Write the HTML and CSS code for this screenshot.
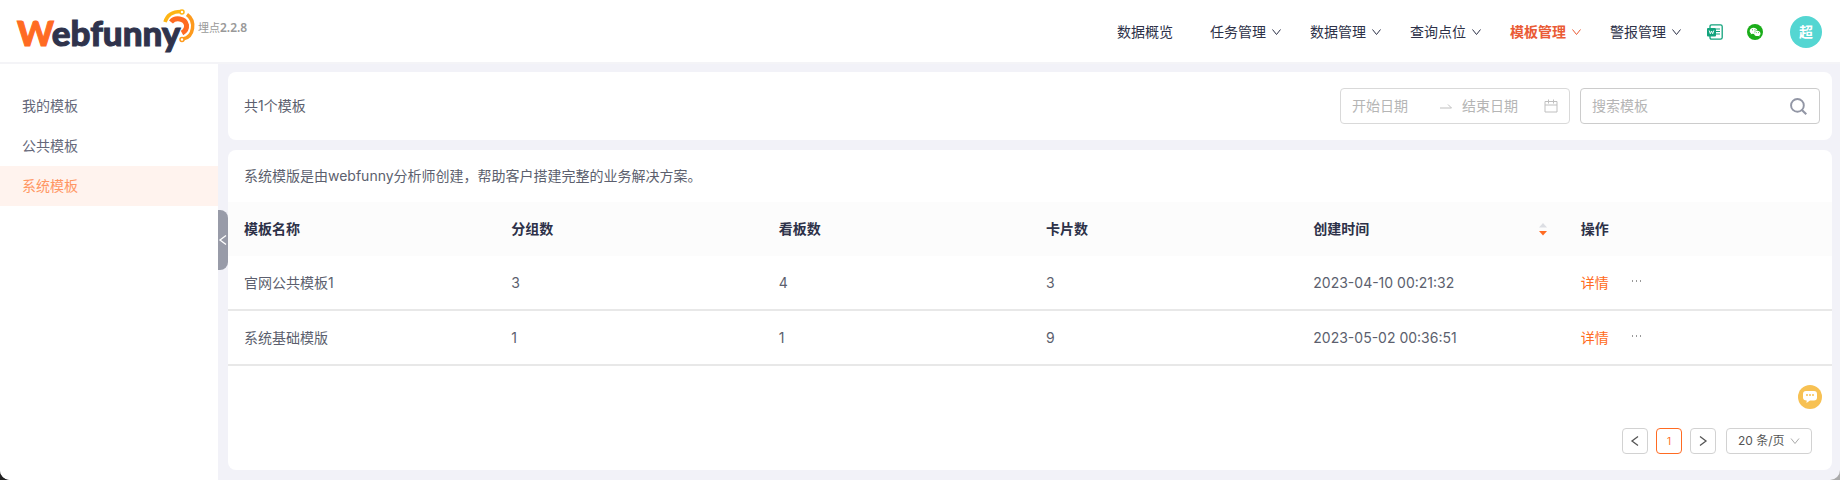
FILE: index.html
```html
<!DOCTYPE html>
<html lang="zh-CN">
<head>
<meta charset="utf-8">
<meta name="viewport" content="width=device-width, initial-scale=1">
<title>Webfunny 模板管理</title>
<link rel="stylesheet" href="styles.css">
</head>
<body>
<svg class="sprite" aria-hidden="true">
  <symbol id="chevron-down" viewBox="0 0 10 10"><path d="M1 2.5 5 7.5 9 2.5" fill="none" stroke="currentColor"/></symbol>
  <symbol id="chevron-left" viewBox="0 0 10 12"><path d="M8 1.500 2 6l6 4.500" fill="none" stroke="currentColor" stroke-width="1.300"/></symbol>
  <symbol id="chevron-right" viewBox="0 0 10 12"><path d="M2 1.500 8 6l-6 4.500" fill="none" stroke="currentColor" stroke-width="1.300"/></symbol>
</svg>
<div class="app">
  <header class="header">
    <a class="logo" href="#" aria-label="Webfunny">
      <span class="logo-text"><span class="logo-initial">W</span>ebfunny</span>
      <svg class="logo-signal" viewBox="0 0 34 36" aria-hidden="true">
        <path d="M3 14C5 7 11 3.500 19 3.500" fill="none" stroke="#fdb515" stroke-width="3.500"/>
        <circle cx="20" cy="4" r="2" fill="#fff" stroke="#fdb515" stroke-width="1.500"/>
        <path d="M25 6.500C34 13 32 29 21 31" fill="none" stroke="#fd9a1d" stroke-width="3.500"/>
        <circle cx="20" cy="31.500" r="2" fill="#fff" stroke="#fd9a1d" stroke-width="1.500"/>
        <path d="M9 14C13 9 23 10 24.500 17c.5 4-1 6-4.500 8" fill="none" stroke="#ff6b22" stroke-width="5"/>
      </svg>
    </a>
    <span class="version">埋点<b>2.2.8</b></span>
    <nav class="nav">
      <a class="nav-item nav-first" href="#">数据概览</a>
      <a class="nav-item" href="#">任务管理<svg class="caret"><use href="#chevron-down"/></svg></a>
      <a class="nav-item" href="#">数据管理<svg class="caret"><use href="#chevron-down"/></svg></a>
      <a class="nav-item" href="#">查询点位<svg class="caret"><use href="#chevron-down"/></svg></a>
      <a class="nav-item active" href="#">模板管理<svg class="caret"><use href="#chevron-down"/></svg></a>
      <a class="nav-item" href="#">警报管理<svg class="caret"><use href="#chevron-down"/></svg></a>
    </nav>
    <div class="tools">
      <a href="#" aria-label="文档"><svg class="tool-icon" viewBox="0 0 16 16">
        <path d="M3 4V2.500Q3 .8 4.500 .8h9Q15.200 .8 15.200 2.500v11q0 1.700-1.700 1.700h-9Q3 15.200 3 13.500V12" fill="#fff" stroke="#12a37c" stroke-width="1.300"/>
        <path d="M9 5h4M9 7.500h4M9 10h4" stroke="#12a37c" stroke-width="1.200"/>
        <rect y="4" width="9" height="8.500" rx="1" fill="#12a37c"/>
        <path d="M2.200 6.500 3.300 9.800 4.500 7l1.200 2.800L6.800 6.500" fill="none" stroke="#fff" stroke-width=".9"/>
      </svg></a>
      <a href="#" aria-label="微信"><svg class="tool-icon" viewBox="0 0 16 16">
        <circle cx="8" cy="8" r="8" fill="#1aad19"/>
        <path d="M6.600 3.800C4.300 3.800 2.700 5.200 2.700 6.900c0 1 .5 1.800 1.300 2.400l-.3 1.200 1.400-.7 1.500.2h.3C6.600 8 8.200 6.200 10.400 6.200 10 4.700 8.400 3.800 6.600 3.800z" fill="#fff"/>
        <path d="M10.300 6.700c-1.900 0-3.300 1.200-3.300 2.700s1.500 2.700 3.300 2.700l1.200-.2 1.100.6-.3-1c.7-.5 1.200-1.200 1.200-2.100 0-1.500-1.500-2.700-3.200-2.700z" fill="#fff"/>
        <path d="M5 5.800h.9M7.500 5.800h.9M8.800 8.600h.8M11 8.600h.8" stroke="#1aad19" stroke-width=".9"/>
      </svg></a>
      <button class="avatar" type="button">超</button>
    </div>
  </header>

  <div class="body">
    <aside class="sidebar">
      <a class="side-item" href="#">我的模板</a>
      <a class="side-item" href="#">公共模板</a>
      <a class="side-item active" href="#">系统模板</a>
      <button class="collapse" type="button" aria-label="收起菜单"><svg viewBox="0 0 10 12"><use href="#chevron-left"/></svg></button>
    </aside>

    <main class="main">
      <section class="card filter">
        <span class="count">共1个模板</span>
        <div class="range">
          <input class="range-input" type="text" placeholder="开始日期" aria-label="开始日期">
          <svg class="range-arrow" viewBox="0 0 12 6"><path d="M0 5h11.500L8 1.500" fill="none" stroke="currentColor"/></svg>
          <input class="range-input range-end" type="text" placeholder="结束日期" aria-label="结束日期">
          <svg class="calendar" viewBox="0 0 14 14"><path d="M1 2.500h12v10.500H1zM1 6h12M4.500 .5v4M9.500 .5v4" fill="none" stroke="currentColor"/></svg>
        </div>
        <div class="search">
          <input class="search-input" type="text" placeholder="搜索模板" aria-label="搜索模板">
          <button class="search-button" type="button" aria-label="搜索"><svg viewBox="0 0 16 16"><circle cx="7" cy="7" r="6" fill="none" stroke="currentColor" stroke-width="1.800"/><path d="m11 11 4.300 4.300" stroke="currentColor" stroke-width="2"/></svg></button>
        </div>
      </section>

      <section class="card list">
        <p class="intro">系统模版是由webfunny分析师创建，帮助客户搭建完整的业务解决方案。</p>
        <table class="table">
          <thead>
            <tr><th>模板名称</th><th>分组数</th><th>看板数</th><th>卡片数</th>
              <th><span class="sortable">创建时间<svg class="sorter" viewBox="0 0 8 13"><path d="M4 0l4 4.500H0z" fill="#dcdee3"/><path d="M4 12.500 0 8h8z" fill="#ff6b22"/></svg></span></th>
              <th>操作</th></tr>
          </thead>
          <tbody>
            <tr><td>官网公共模板1</td><td>3</td><td>4</td><td>3</td><td>2023-04-10 00:21:32</td>
              <td><div class="actions"><a href="#">详情</a><button class="more" type="button" aria-label="更多"><svg viewBox="0 0 12 2"><path d="M1 0h1v2H1zM5 0h1v2H5zM9 0h1v2H9z" fill="currentColor"/></svg></button></div></td></tr>
            <tr><td>系统基础模版</td><td>1</td><td>1</td><td>9</td><td>2023-05-02 00:36:51</td>
              <td><div class="actions"><a href="#">详情</a><button class="more" type="button" aria-label="更多"><svg viewBox="0 0 12 2"><path d="M1 0h1v2H1zM5 0h1v2H5zM9 0h1v2H9z" fill="currentColor"/></svg></button></div></td></tr>
          </tbody>
        </table>
        <div class="pagination">
          <button class="page" type="button" aria-label="上一页"><svg viewBox="0 0 10 12"><use href="#chevron-left"/></svg></button>
          <button class="page current" type="button">1</button>
          <button class="page" type="button" aria-label="下一页"><svg viewBox="0 0 10 12"><use href="#chevron-right"/></svg></button>
          <div class="size">
            <select class="size-select" aria-label="每页条数"><option>20 条/页</option></select>
            <svg class="size-caret"><use href="#chevron-down"/></svg>
          </div>
        </div>
      </section>
    </main>
  </div>
  <button class="chat" type="button" aria-label="在线客服"><svg viewBox="0 0 14 12"><path d="M3 0h8q3 0 3 3v3.500q0 3-3 3H7L3.500 12l.2-2.500Q0 9.500 0 6.500V3q0-3 3-3z" fill="#fff"/><path d="M3 4h2M6 4h2M9 4h2" stroke="#f7c153" stroke-width="1.500"/></svg></button>
</div>
</body>
</html>
```
FILE: styles.css
```css
* { box-sizing: border-box; }

html { background: linear-gradient(90deg, #222 50%, #aaa 50%); }

body {
  margin: 0;
  color: #5c5f6e;
  font: 14px/22px Inter, "Noto Sans CJK SC", sans-serif;
}

a { color: inherit; text-decoration: none; }
button, input, select { margin: 0; padding: 0; border: 0; background: none; color: inherit; font: inherit; }
button { cursor: pointer; display: inline-flex; align-items: center; justify-content: center; }
svg { display: block; flex: none; }
.sprite { position: absolute; width: 0; height: 0; }

.app {
  position: relative;
  display: flex;
  flex-direction: column;
  min-height: 100vh;
  overflow: hidden;
  border-radius: 0 0 10px 10px;
  background: #f2f2f8;
}

/* Header */
.header {
  display: flex;
  align-items: center;
  height: 64px;
  padding: 2px 18px 0 17px;
  border-bottom: 2px solid #f4f4f7;
  background: #fff;
  color: #2d3148;
}
.logo { position: relative; display: block; width: 179px; }
.logo-text { font: 900 35px/42px Lato, sans-serif; color: #2f334c; -webkit-text-stroke: 1px currentColor; }
.logo-initial { color: #ff6b22; }
.logo-signal { position: absolute; right: 0; top: -3px; width: 34px; height: 36px; }
.version { margin: 0 auto 8px 2px; font-size: 11px; line-height: 16px; color: #999; }
.version b { font: 600 12px/16px "Noto Sans", sans-serif; }
.nav { display: flex; gap: 28px; }
.nav-item { display: flex; align-items: center; gap: 5px; }
.nav-first { padding-right: 9px; }
.nav-item.active { color: #ea5b35; font-weight: 700; }
.caret { width: 11px; height: 10px; }
.tools { display: flex; align-items: center; gap: 24px; margin-left: 25px; }
.tool-icon { width: 16px; height: 16px; }
.avatar { width: 32px; height: 32px; margin-left: 3px; border-radius: 50%; background: #54d6d2; color: #fff; font-weight: 700; }

/* Layout */
.body { display: flex; flex: 1; }
.sidebar { position: relative; flex: none; width: 218px; padding-top: 22px; background: #fff; }
.side-item { display: block; padding: 9px 22px; color: #65687a; }
.side-item.active { background: #fff3ee; color: #ff9663; }
.collapse {
  position: absolute;
  left: 100%;
  top: 146px;
  width: 10px;
  height: 60px;
  border-radius: 0 8px 8px 0;
  background: #989ba8;
  color: #fff;
}
.collapse svg { width: 10px; height: 12px; }
.main { display: flex; flex: 1; flex-direction: column; gap: 10px; padding: 8px 8px 10px 10px; }
.card { border-radius: 8px; background: #fff; }

/* Filter bar */
.filter { display: flex; align-items: center; gap: 10px; padding: 16px 12px 16px 16px; }
.count { margin-right: auto; }
.range, .search { display: flex; align-items: center; height: 36px; border: 1px solid #d9d9d9; border-radius: 4px; }
.range { width: 230px; padding: 0 11px; color: #bfbfbf; }
.search { width: 240px; padding: 0 12px 0 11px; border-color: #ccc; }
.range-input, .search-input { flex: 1; min-width: 0; outline: 0; }
.range-input::placeholder, .search-input::placeholder { color: #b5b5b5; opacity: 1; }
.range-arrow { width: 12px; height: 6px; margin-right: 10px; }
.range-end { flex: none; width: 82px; }
.calendar { width: 14px; height: 14px; }
.search-button { color: #9296a5; }
.search-button svg { width: 17px; height: 17px; }

/* Template list */
.list { display: flex; flex: 1; flex-direction: column; }
.intro { margin: 0; padding: 15px 16px; }
.table { width: 100%; table-layout: fixed; border-collapse: separate; border-spacing: 0; }
.table th, .table td { padding: 16px; text-align: left; }
.table th { background: #fcfcfc; color: #2d3148; font-weight: 600; }
.table td { height: 55px; padding: 15px 16px; border-bottom: 2px solid #e8e8e8; }
.sortable { display: flex; align-items: center; justify-content: space-between; }
.sorter { width: 8px; height: 13px; margin-right: 2px; }
.actions { display: flex; align-items: center; gap: 22px; color: #ff6b22; }
.more { color: #999; padding-bottom: 4px; }
.more svg { width: 12px; height: 2px; }

/* Pagination */
.pagination { display: flex; gap: 8px; justify-content: flex-end; margin-top: auto; padding: 0 20px 16px; font-size: 12px; color: #555; }
.page, .size { height: 26px; border: 1px solid #d2d2d2; border-radius: 4px; }
.page { width: 26px; }
.page svg { width: 10px; height: 12px; }
.page.current { border-color: #ff6b22; color: #ff6b22; font-size: 10px; }
.size { position: relative; width: 86px; margin-left: 2px; }
.size-select { width: 100%; height: 24px; padding-left: 11px; appearance: none; outline: 0; }
.size-caret { position: absolute; right: 11px; top: 7px; width: 10px; height: 10px; color: #aaa; pointer-events: none; }

.chat { position: absolute; right: 18px; bottom: 71px; width: 24px; height: 24px; border-radius: 50%; background: #f7c153; }
.chat svg { width: 14px; height: 12px; }
```
